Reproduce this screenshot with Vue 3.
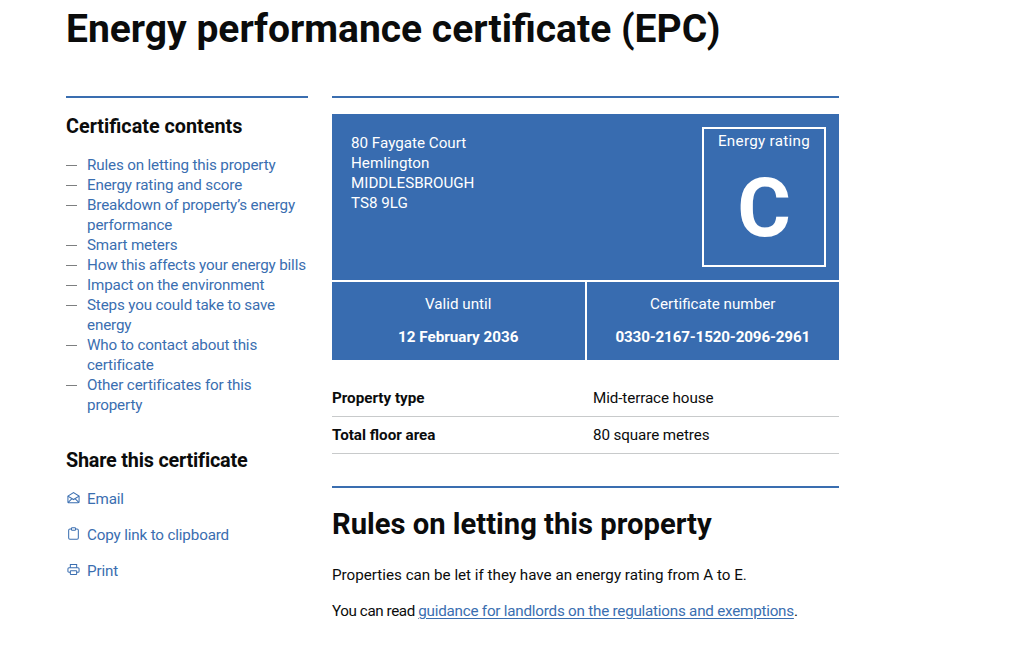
<script setup>
const contents = [
  'Rules on letting this property',
  'Energy rating and score',
  'Breakdown of property’s energy performance',
  'Smart meters',
  'How this affects your energy bills',
  'Impact on the environment',
  'Steps you could take to save energy',
  'Who to contact about this certificate',
  'Other certificates for this property'
]
</script>

<template>
  <div class="page">
    <h1 class="title">Energy performance certificate (EPC)</h1>
    <div class="columns">
      <aside class="side">
        <h2 class="side-head">Certificate contents</h2>
        <ul class="toc">
          <li v-for="item in contents" :key="item" class="toc-item">
            <span class="dash"></span>
            <a class="link">{{ item }}</a>
          </li>
        </ul>
        <h2 class="side-head share-head">Share this certificate</h2>
        <div class="share">
          <a class="share-row">
            <svg class="ico" viewBox="0 0 14 14" fill="none" stroke="currentColor" stroke-width="1.1">
              <path d="M1 5.5 7 1.6l6 3.9v6.2a1 1 0 0 1-1 1H2a1 1 0 0 1-1-1z" />
              <path d="M1 5.5 7 9.2l6-3.7M1 12.4l4.4-4.2M13 12.4 8.6 8.2" />
            </svg>
            <span>Email</span>
          </a>
          <a class="share-row">
            <svg class="ico" viewBox="0 0 14 14" fill="none" stroke="currentColor" stroke-width="1.1">
              <rect x="1.8" y="2.2" width="10.4" height="11" rx="1.4" />
              <rect x="4.8" y="0.8" width="4.4" height="2.6" rx="0.8" fill="#fff" />
            </svg>
            <span>Copy link to clipboard</span>
          </a>
          <a class="share-row">
            <svg class="ico" viewBox="0 0 14 14" fill="none" stroke="currentColor" stroke-width="1.1">
              <path d="M3.6 5V1.6h6.8V5" />
              <rect x="1" y="5" width="12" height="5" rx="1.2" />
              <rect x="3.6" y="8.4" width="6.8" height="4" rx="0.6" fill="#fff" />
            </svg>
            <span>Print</span>
          </a>
        </div>
      </aside>
      <main class="main">
        <section class="card">
          <div class="card-top">
            <div class="address">
              <div>80 Faygate Court</div>
              <div>Hemlington</div>
              <div>MIDDLESBROUGH</div>
              <div>TS8 9LG</div>
            </div>
            <div class="rating">
              <div class="rating-label">Energy rating</div>
              <div class="rating-letter">C</div>
            </div>
          </div>
          <div class="card-bottom">
            <div class="cell">
              <div>Valid until</div>
              <div class="cell-value">12 February 2036</div>
            </div>
            <div class="cell">
              <div>Certificate number</div>
              <div class="cell-value">0330-2167-1520-2096-2961</div>
            </div>
          </div>
        </section>
        <dl class="facts">
          <div class="fact">
            <dt>Property type</dt>
            <dd>Mid-terrace house</dd>
          </div>
          <div class="fact">
            <dt>Total floor area</dt>
            <dd>80 square metres</dd>
          </div>
        </dl>
        <h2 class="section-head">Rules on letting this property</h2>
        <p class="para">Properties can be let if they have an energy rating from A to E.</p>
        <p class="para second">You can read <a class="inline-link">guidance for landlords on the regulations and exemptions</a>.</p>
      </main>
    </div>
  </div>
</template>

<style>
html, body { margin: 0; overflow: hidden; background: #fff; }
</style>

<style scoped>
.page {
  height: 646px;
  overflow: hidden;
  padding-left: 66px;
  box-sizing: border-box;
  font-family: Roboto, "Liberation Sans", sans-serif;
  font-size: 15.2px;
  line-height: 20px;
  color: #0b0c0c;
}
.title {
  margin: 0;
  padding-top: 7px;
  height: 90px;
  box-sizing: border-box;
  font-size: 39px;
  line-height: 44px;
  font-weight: 700;
}
.columns { display: flex; gap: 24px; width: 773px; margin-top: 6px; }
.side { width: 242px; border-top: 2px solid #3a6eb0; flex: none; padding-top: 2px; }
.main { width: 507px; border-top: 2px solid #3a6eb0; padding-top: 16px; }
.side-head { margin: 15px 0 0; font-size: 19.8px; line-height: 24px; font-weight: 700; }
.toc { list-style: none; margin: 16px 0 0; padding: 0; }
.toc-item { display: flex; }
.dash { flex: none; width: 11px; height: 1px; margin: 10px 10px 0 0; background: #7d7f80; }
.link { color: #3a6eb0; letter-spacing: -0.15px; }
.share-head { margin-top: 34px; letter-spacing: -0.2px; }
.share { display: flex; flex-direction: column; gap: 16px; margin-top: 16px; }
.share-row { display: flex; align-items: center; color: #3a6eb0; letter-spacing: -0.15px; }
.ico { width: 13px; height: 13px; margin: -4px 7px 0 1px; flex: none; }
.card { background: #386cb0; color: #fff; }
.card-top { display: flex; justify-content: space-between; height: 166px; padding: 13px 13px 0 19px; box-sizing: border-box; }
.address { padding-top: 6px; }
.rating { width: 124px; height: 140px; box-sizing: border-box; border: 2px solid #fff; text-align: center; }
.rating-label { margin-top: 2px; letter-spacing: 0.3px; }
.rating-letter { font-size: 82px; line-height: 86px; font-weight: 700; margin-top: 14px; }
.card-bottom { display: flex; height: 80px; border-top: 2px solid #fff; box-sizing: border-box; }
.cell { flex: 1; text-align: center; padding-top: 12px; box-sizing: border-box; }
.cell + .cell { border-left: 2px solid #fff; }
.cell-value { margin-top: 13px; font-weight: 700; }
.cell + .cell .cell-value { letter-spacing: -0.15px; }
.facts { margin: 20px 0 0; }
.fact { display: flex; height: 37px; box-sizing: border-box; border-bottom: 1px solid #c8cacb; padding-top: 8px; }
dt { width: 261px; font-weight: 700; }
dd { margin: 0; letter-spacing: -0.1px; }
.section-head { margin: 32px 0 0; padding-top: 19px; border-top: 2px solid #3a6eb0; font-size: 29.2px; line-height: 34px; font-weight: 700; }
.para { margin: 24px 0 0; }
.para.second { margin-top: 16px; letter-spacing: -0.4px; }
.inline-link { color: #3a6eb0; text-decoration: underline; text-underline-offset: 2px; letter-spacing: -0.22px; }
</style>
